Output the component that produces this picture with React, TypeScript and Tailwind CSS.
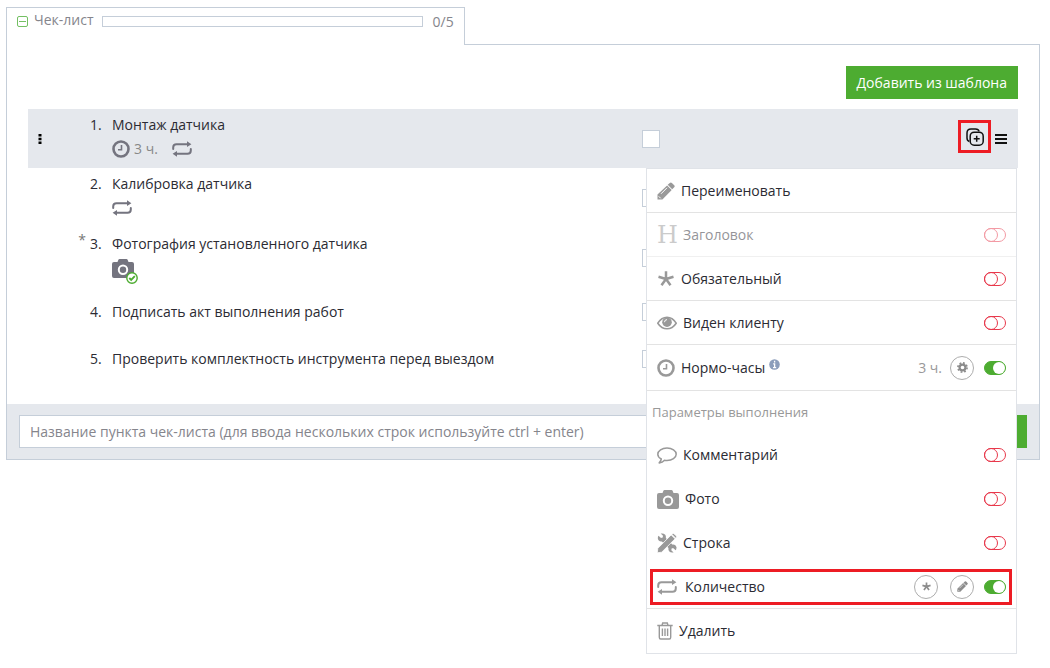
import { ReactNode } from 'react';

interface IconProps {
  className?: string;
}

function ClockIcon({ className }: IconProps) {
  return (
    <svg viewBox="0 0 18 18" className={className} fill="none" stroke="currentColor">
      <circle cx="9" cy="9" r="7.5" strokeWidth="2.6" />
      <path d="M9.500 5v4.700H6" strokeWidth="1.600" />
    </svg>
  );
}

function RepeatIcon({ className }: IconProps) {
  return (
    <svg viewBox="0 0 20 16" className={className} fill="none" stroke="currentColor" strokeWidth="2" strokeLinecap="round">
      <path d="M1.200 8V6.500Q1.200 3.200 4.500 3.200H16" />
      <path d="M18.800 8v1.500Q18.800 12.800 15.500 12.800H4" />
      <path d="M15 0.300 19.400 3.200 15 6.100zM5 9.900 0.600 12.800 5 15.700z" fill="currentColor" stroke="none" />
    </svg>
  );
}

function CameraIcon({ className }: IconProps) {
  return (
    <svg viewBox="0 0 22 19" className={className} fill="currentColor">
      <path
        fillRule="evenodd"
        d="M7.500 0h7q.8 0 1.100.8L16.500 3H20q2 0 2 2v12q0 2-2 2H2q-2 0-2-2V5q0-2 2-2h3.500l.9-2.200Q6.700 0 7.500 0zM11 5.600a5.200 5.200 0 1 0 0 10.400 5.200 5.200 0 0 0 0-10.400z"
      />
      <circle cx="11" cy="10.800" r="3.200" />
    </svg>
  );
}

function PencilIcon({ className }: IconProps) {
  return (
    <svg viewBox="0 0 18 18" className={className} fill="currentColor">
      <path d="M12.800.9q1-1 2.100 0l2.300 2.300q1 1 0 2l-2 2-4.500-4.500z" />
      <path d="M10.100 3.400l4.600 4.600L5.400 17.500H.5v-4.900z" />
      <path d="M10 5.800l-6 6M1.700 14.300l2 2" stroke="white" strokeWidth="1" />
    </svg>
  );
}

function AsteriskIcon({ className }: IconProps) {
  return (
    <svg viewBox="0 0 16 16" className={className} fill="none" stroke="currentColor" strokeWidth="2.500">
      <path d="M8 8V.3M8 8L.5 5.700M8 8l7.500-2.300M8 8l-4.500 6.300M8 8l4.500 6.300" />
    </svg>
  );
}

function EyeIcon({ className }: IconProps) {
  return (
    <svg viewBox="0 0 20 14" className={className} fill="none" stroke="currentColor">
      <path d="M.8 7.200Q4.500 1.200 10 1.200t9.200 6Q15.500 12.800 10 12.800T.8 7.200z" strokeWidth="1.600" />
      <circle cx="10" cy="6.200" r="4.800" fill="currentColor" stroke="none" />
      <path d="M7.500 6.200Q7.500 3.700 10 3.600" stroke="white" strokeWidth="1" />
    </svg>
  );
}

function CommentIcon({ className }: IconProps) {
  return (
    <svg viewBox="0 0 20 17" className={className} fill="none" stroke="currentColor" strokeWidth="1.500" strokeLinejoin="round">
      <path d="M10 1C5 1 .8 3.700.8 7.200c0 2 1.400 3.700 3.500 4.800-.3 1.600-1 2.800-2.100 3.900 2.300-.3 4-1.200 5.300-2.700q1.200.2 2.500.2c5.100 0 9.200-2.700 9.200-6.200S15.100 1 10 1z" />
    </svg>
  );
}

function ToolsIcon({ className }: IconProps) {
  return (
    <svg viewBox="0 0 20 20" className={className} fill="currentColor">
      <path d="M1.500 2.800 4 5l1.700-.4L6 2.800 3.700.6Q6.500-.1 8.200 1.800q1 1.300.6 3.100l9 9 1 3.300L16.300 15l-1.700.4-.3 1.800 2.300 2.200q-2.800.7-4.500-1.200-1-1.300-.6-3.100L4.900 8.400Q1.600 8.800.9 5.700.6 4 1.500 2.800z" />
      <path d="M15.400 11.600q3.300-.4 4 2.700.3 1.700-.6 2.900L16.300 15z" />
      <path d="M.8 15.300 14.200 1.900l3.900 3.900L4.700 19.200l-4.400.6zM15.200.9q1-1 2 0l1.900 1.900q1 1 0 2l-.4.400-3.900-3.900z" stroke="white" strokeWidth=".8" />
    </svg>
  );
}

function TrashIcon({ className }: IconProps) {
  return (
    <svg viewBox="0 0 16 18" className={className} fill="none" stroke="currentColor" strokeWidth="1.400">
      <path d="M.3 3.500h15.400M5 3.200 5.700 1h4.600l.7 2.200M2.300 3.800v11.400q0 1.800 1.400 1.800h8.600q1.400 0 1.400-1.800V3.800M5.400 6.500v7.500M8 6.500v7.500M10.600 6.500v7.500" />
    </svg>
  );
}

function GearIcon({ className }: IconProps) {
  return (
    <svg viewBox="0 0 12 12" className={className} fill="none" stroke="currentColor">
      <circle cx="6" cy="6" r="3.200" strokeWidth="2.400" />
      <circle cx="6" cy="6" r="5" strokeWidth="1.800" strokeDasharray="1.960 1.960" />
    </svg>
  );
}

function StarIcon({ className }: IconProps) {
  return (
    <svg viewBox="0 0 16 16" className={className} fill="none" stroke="currentColor" strokeWidth="3">
      <path d="M8 8.200V.8M8 8.200L.8 6.100M8 8.200l7.200-2.100M8 8.200l-4.500 6M8 8.200l4.500 6" />
    </svg>
  );
}

function CopyPlusIcon({ className }: IconProps) {
  return (
    <svg viewBox="0 0 18 18" className={className} fill="none" stroke="currentColor" strokeWidth="1.500">
      <rect x="4.200" y="4.200" width="13" height="13" rx="4" />
      <path d="M3.300 13.400Q1 12.800 1 10V5Q1 1 5 1H9.500q3 0 3.600 2.400M10.700 7.700v6M7.700 10.700h6" />
    </svg>
  );
}

function CheckBadge({ className }: IconProps) {
  return (
    <svg viewBox="0 0 12 12" className={className} fill="none" stroke="#4dac31">
      <circle cx="6" cy="6" r="5.200" fill="white" strokeWidth="1.400" />
      <path d="M3.300 6l1.900 1.900L8.800 4.200" strokeWidth="1.900" />
    </svg>
  );
}

interface Task {
  title: string;
  height: string;
  required?: boolean;
  details?: ReactNode;
}

const tasks: Task[] = [
  {
    title: 'Монтаж датчика',
    height: 'min-h-[59px]',
    details: (
      <>
        <ClockIcon className="w-[18px] h-[18px]" />
        <span className="ml-1 text-[#888]">3 ч.</span>
        <RepeatIcon className="ml-3.5 w-5 h-4" />
      </>
    ),
  },
  {
    title: 'Калибровка датчика',
    height: 'min-h-[60px]',
    details: <RepeatIcon className="w-5 h-4" />,
  },
  {
    title: 'Фотография установленного датчика',
    height: 'min-h-[60px]',
    required: true,
    details: (
      <span className="relative">
        <CameraIcon className="w-[22px] h-[19px]" />
        <CheckBadge className="absolute -right-1 -bottom-1.5 w-3 h-3" />
      </span>
    ),
  },
  { title: 'Подписать акт выполнения работ', height: 'min-h-12' },
  { title: 'Проверить комплектность инструмента перед выездом', height: 'min-h-[46px]' },
];

interface MenuToggleProps {
  id: string;
  icon: ReactNode;
  label: string;
  hint?: ReactNode;
  on?: boolean;
  disabled?: boolean;
  children?: ReactNode;
}

function MenuToggle({ id, icon, label, hint, on, disabled, children }: MenuToggleProps) {
  return (
    <div className={`flex flex-1 items-center ${disabled ? 'opacity-50' : ''}`}>
      <label htmlFor={id} className="flex items-center gap-1.5">
        <span className="text-[#999]">{icon}</span>
        {label}
      </label>
      {hint}
      <div className="ml-auto flex items-center gap-2.5">
        {children}
        <input
          id={id}
          type="checkbox"
          role="switch"
          defaultChecked={on}
          disabled={disabled}
          className="relative h-3.5 w-[22px] appearance-none rounded-full border border-[#e8384b] before:absolute before:-top-px before:-left-px before:h-3.5 before:w-3.5 before:rounded-full before:border before:border-[#e8384b] checked:border-[#4dac31] checked:bg-[#4dac31] checked:before:top-0 checked:before:left-2 checked:before:h-3 checked:before:w-3 checked:before:border-0 checked:before:bg-white"
        />
      </div>
    </div>
  );
}

function RoundButton({ label, children }: { label: string; children: ReactNode }) {
  return (
    <button
      aria-label={label}
      className="flex h-6 w-6 items-center justify-center rounded-full border border-[#adadad] text-[#8c8c8c]"
    >
      {children}
    </button>
  );
}

function InfoIcon({ className }: IconProps) {
  return (
    <svg viewBox="0 0 11 11" className={className}>
      <circle cx="5.500" cy="5.500" r="5.300" fill="#8b9dbb" />
      <path d="M5.600 1.800v1.600M4.200 4.800h1.400v3.500M4 8.600h3.200" stroke="white" strokeWidth="1.300" fill="none" />
    </svg>
  );
}

function TaskMenu() {
  return (
    <div className="absolute top-full right-px z-10 w-[371px] border border-[#e0e3e8] bg-white">
      <div className="flex h-11 items-center border-b border-[#e3e3e3] px-2.5">
        <button className="flex items-center gap-1.5">
          <PencilIcon className="w-[18px] h-[18px] text-[#999]" />
          Переименовать
        </button>
      </div>
      <div className="flex h-11 border-b border-[#f0f0f0] px-2.5">
        <MenuToggle
          id="heading"
          icon={<span className="block w-5 font-['DejaVu_Serif',serif] text-2xl/6">H</span>}
          label="Заголовок"
          disabled
        />
      </div>
      <div className="flex h-11 border-b border-[#e3e3e3] px-2.5">
        <MenuToggle id="required" icon={<AsteriskIcon className="mx-px w-4 h-4" />} label="Обязательный" />
      </div>
      <div className="flex h-11 border-b border-[#e3e3e3] px-2.5">
        <MenuToggle id="visible" icon={<EyeIcon className="w-5 h-3.5" />} label="Виден клиенту" />
      </div>
      <div className="flex h-[46px] border-b border-[#e3e3e3] px-2.5">
        <MenuToggle
          id="hours"
          icon={<ClockIcon className="w-[18px] h-[18px]" />}
          label="Нормо-часы"
          hint={<InfoIcon className="mb-1.5 ml-1 w-[11px] h-[11px]" />}
          on
        >
          <div className="flex items-center gap-2">
            <span className="text-[#999]">3 ч.</span>
            <RoundButton label="Настроить">
              <GearIcon className="w-[11px] h-[11px]" />
            </RoundButton>
          </div>
        </MenuToggle>
      </div>
      <p className="flex h-[42px] items-center px-[5px] text-[13px] text-[#999]">Параметры выполнения</p>
      <div className="flex h-11 px-2.5">
        <MenuToggle id="comment" icon={<CommentIcon className="w-5 h-[17px]" />} label="Комментарий" />
      </div>
      <div className="flex h-11 px-2.5">
        <MenuToggle id="photo" icon={<CameraIcon className="w-[22px] h-[19px]" />} label="Фото" />
      </div>
      <div className="flex h-11 px-2.5">
        <MenuToggle id="line" icon={<ToolsIcon className="w-5 h-5" />} label="Строка" />
      </div>
      <div className="flex h-11 items-center border-b border-[#e3e3e3] pr-1 pl-[3px]">
        <div className="flex h-9 flex-1 border-[3px] border-[#ed1c24] pr-[3px] pl-1">
          <MenuToggle id="quantity" icon={<RepeatIcon className="mr-0.5 w-5 h-4" />} label="Количество" on>
            <div className="flex gap-3">
              <RoundButton label="Обязательно">
                <StarIcon className="w-[9px] h-[9px]" />
              </RoundButton>
              <RoundButton label="Изменить">
                <PencilIcon className="w-[11px] h-[11px]" />
              </RoundButton>
            </div>
          </MenuToggle>
        </div>
      </div>
      <div className="flex h-11 items-center px-2.5">
        <button className="flex items-center gap-1.5">
          <TrashIcon className="w-4 h-[18px] text-[#999]" />
          Удалить
        </button>
      </div>
    </div>
  );
}

export default function App() {
  return (
    <main className="min-h-screen bg-white pt-[7px] pr-2.5 pb-3 pl-1.5 font-['Open_Sans',sans-serif] text-sm/5 text-[#2b2b33]">
      <div className="relative -mb-px flex h-[38px] w-fit items-start border border-b-0 border-[#c5ced9] bg-white px-2.5 pt-0.5 text-[#85858c]">
        <button aria-label="Свернуть" className="mt-1.5">
          <svg viewBox="0 0 11 11" className="w-[11px] h-[11px]" fill="none" stroke="#74c063">
            <rect x="0.500" y="0.500" width="10" height="10" rx="1.500" />
            <path d="M2 5.500h7" />
          </svg>
        </button>
        <h2 className="ml-1.5">Чек-лист</h2>
        <div role="progressbar" aria-valuenow={0} aria-valuemax={5} className="mt-1.5 ml-2 h-[11px] w-[321px] border border-[#c5ced9]" />
        <span className="mt-0.5 ml-2.5">0/5</span>
      </div>

      <section className="border border-[#c5ced9]">
        <div className="px-[21px] pt-[21px] pb-[22px]">
          <div className="flex justify-end pb-2.5">
            <button className="h-[33px] bg-[#4dac31] px-[11px] text-white">Добавить из шаблона</button>
          </div>
          <ol>
            {tasks.map((task, index) => (
              <li
                key={task.title}
                className={`relative grid grid-cols-[62px_22px_1fr_376px] ${task.height} ${index === 0 ? 'bg-[#e5e8ed]' : ''} ${task.details ? '' : 'items-center'}`}
              >
                <div className="flex self-stretch">
                  {index === 0 && (
                    <button aria-label="Переместить" className="ml-2.5 self-center">
                      <svg viewBox="0 0 4 12" className="w-1 h-3">
                        <path d="M.5 1h3v2.500h-3zM.5 4.800h3v2.500h-3zM.5 8.600h3v2.500h-3z" />
                      </svg>
                    </button>
                  )}
                  {task.required && <span className="ml-auto pt-0.5 pr-1 text-[#777]">*</span>}
                </div>
                <span className={task.details ? 'pt-1.5' : ''}>{index + 1}.</span>
                <div className={task.details ? 'pt-1.5' : ''}>
                  <label htmlFor={`task-${index}`}>{task.title}</label>
                  {task.details && <div className="mt-1 flex h-5 items-center text-[#74747f]">{task.details}</div>}
                </div>
                <div className="flex items-center justify-between self-center">
                  <input
                    id={`task-${index}`}
                    type="checkbox"
                    className="h-[18px] w-[18px] appearance-none border border-[#c5ced9] bg-white"
                  />
                  {index === 0 && (
                    <div className="flex items-center gap-1 pr-[11px] text-[#111]">
                      <button aria-label="Дублировать" className="mb-1 flex h-[33px] w-[33px] items-center justify-center border-[3px] border-[#ed1c24]">
                        <CopyPlusIcon className="w-[18px] h-[18px]" />
                      </button>
                      <button aria-label="Меню">
                        <svg viewBox="0 0 12 12" className="w-3 h-3" fill="currentColor">
                          <path d="M0 1h12v2H0zM0 5h12v2H0zM0 9h12v2H0z" />
                        </svg>
                      </button>
                    </div>
                  )}
                </div>
                {index === 0 && <TaskMenu />}
              </li>
            ))}
          </ol>
        </div>

        <form className="flex bg-[#e5e8ed] px-3 py-[11px]">
          <input
            type="text"
            aria-label="Название пункта"
            placeholder="Название пункта чек-листа (для ввода нескольких строк используйте ctrl + enter)"
            className="h-[33px] flex-1 border border-[#c5ced9] bg-white px-2.5 placeholder:text-[#85858c]"
          />
          <button type="button" aria-label="Добавить" className="w-[100px] bg-[#4dac31] text-white" />
        </form>
      </section>
    </main>
  );
}
